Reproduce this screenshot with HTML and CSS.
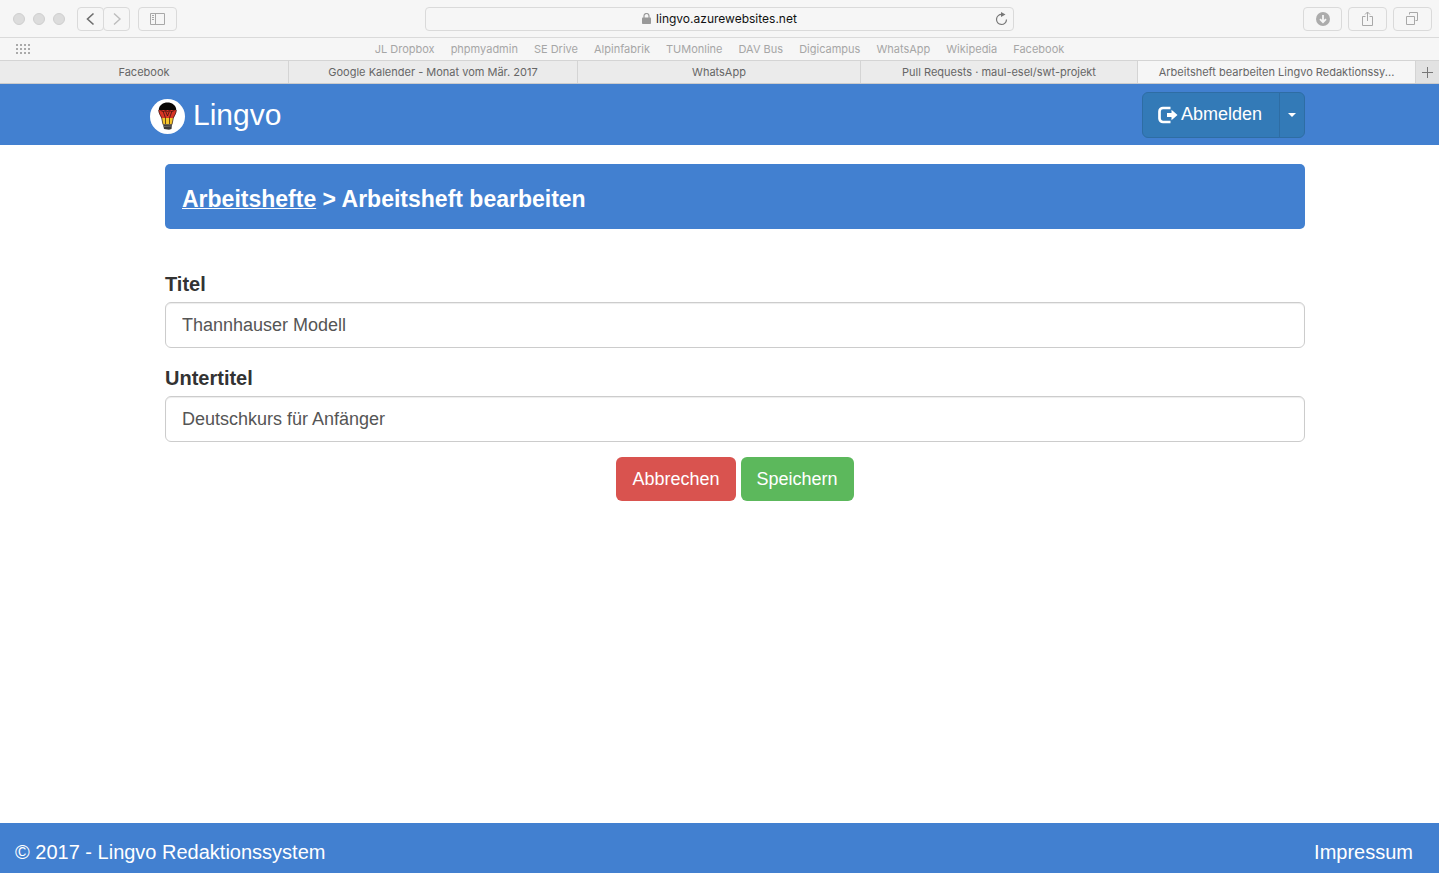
FILE: index.html
```html
<!DOCTYPE html>
<html lang="de">
<head>
<meta charset="utf-8">
<title>Arbeitsheft bearbeiten Lingvo Redaktionssystem</title>
<link rel="stylesheet" href="styles.css">
</head>
<body>
<div class="browser">
  <div class="toolbar">
    <div class="tools">
      <div class="lights"><span class="light"></span><span class="light"></span><span class="light"></span></div>
      <div class="history">
        <button class="tool tool-narrow" type="button" aria-label="Zurück"><svg width="10" height="14" viewBox="0 0 10 14" fill="none" stroke="#6e6e6e" stroke-width="1.6"><path d="M7.500 1.500 1.500 7l6 5.500"/></svg></button>
        <button class="tool tool-narrow" type="button" aria-label="Vorwärts"><svg width="10" height="14" viewBox="0 0 10 14" fill="none" stroke="#bdbdbd" stroke-width="1.400"><path d="m2 1.500 6 5.500-6 5.500"/></svg></button>
      </div>
      <button class="tool" type="button" aria-label="Seitenleiste"><svg width="16" height="12" viewBox="0 0 16 12" fill="none" stroke="#a8a8a8"><path d="M.5.5h14v11H.5zM5.500.5v11M2 2.500h2M2 4.500h2M2 6.500h2"/></svg></button>
    </div>
    <div class="address">
      <svg class="lock" width="9" height="11" viewBox="0 0 9 11"><path d="M2 5V3a2.500 2.500 0 0 1 5 0v2" fill="none" stroke="#999" stroke-width="1.200"/><rect y="4.500" width="9" height="6.500" rx=".8" fill="#999"/></svg>
      <span>lingvo.azurewebsites.net</span>
      <button class="reload" type="button" aria-label="Neu laden"><svg width="13" height="14" viewBox="0 0 13 14"><path d="M7 2.500a5 5 0 1 0 4.500 5" fill="none" stroke="#777" stroke-width="1.200"/><path d="M6 0v5l4.500-2.500z" fill="#777"/></svg></button>
    </div>
    <div class="tools tools-right">
      <button class="tool" type="button" aria-label="Downloads"><svg width="14" height="14" viewBox="0 0 14 14"><circle cx="7" cy="7" r="7" fill="#acacac"/><path d="M7 3v7M4 7.200l3 3 3-3" fill="none" stroke="#f6f6f6" stroke-width="1.800"/></svg></button>
      <button class="tool" type="button" aria-label="Teilen"><svg width="12" height="16" viewBox="0 0 12 16" fill="none" stroke="#a8a8a8"><path d="M3.500 5.500h-3v9h10v-9h-3M5.500 10V1M3 3.500 5.500 1 8 3.500"/></svg></button>
      <button class="tool" type="button" aria-label="Tabs anzeigen"><svg width="13" height="13" viewBox="0 0 13 13" fill="none" stroke="#a8a8a8"><path d="M.5 4.500h8v8h-8zM3.500 2.500v-2h8v8h-2"/></svg></button>
    </div>
  </div>
  <nav class="bookmarks" aria-label="Lesezeichen">
    <svg class="grid-icon" width="15" height="10" viewBox="0 0 15 10" stroke="#aaa" stroke-width="2" stroke-dasharray="2 2"><path d="M0 1h14M0 5h14M0 9h14"/></svg>
    <a href="#">JL Dropbox</a><a href="#">phpmyadmin</a><a href="#">SE Drive</a><a href="#">Alpinfabrik</a><a href="#">TUMonline</a><a href="#">DAV Bus</a><a href="#">Digicampus</a><a href="#">WhatsApp</a><a href="#">Wikipedia</a><a href="#">Facebook</a>
  </nav>
  <div class="tabs">
    <button class="tab" type="button">Facebook</button>
    <button class="tab" type="button">Google Kalender - Monat vom Mär. 2017</button>
    <button class="tab" type="button">WhatsApp</button>
    <button class="tab" type="button">Pull Requests · maul-esel/swt-projekt</button>
    <button class="tab tab-active" type="button">Arbeitsheft bearbeiten Lingvo Redaktionssy...</button>
    <button class="tab-new" type="button" aria-label="Neuer Tab"><svg width="11" height="11" viewBox="0 0 11 11" stroke="#777"><path d="M0 5.500h11M5.500 0v11"/></svg></button>
  </div>
</div>

<header class="navbar">
  <div class="navbar-inner">
    <a class="brand" href="#">
      <svg width="36" height="38" viewBox="0 0 36 38">
        <circle cx="17.500" cy="20.500" r="17.500" fill="#fff"/>
        <path d="M8.700 14.200C9 4 26 4 26.300 14.200z" fill="#0a0706"/>
        <path d="M8.700 14h17.600c.2 3-1.300 5-3 8.200H11.700c-1.700-3.200-3.200-5.200-3-8.200z" fill="#d83424"/>
        <path d="M11.700 22h11.600l-1.300 6.500h-9z" fill="#f5c52b"/>
        <path d="M13 28.200h9l-.5 4.800-2.500.8-5-.8z" fill="#3b3937"/>
        <path d="M8.700 14c0 3 1.800 5.500 3 8l1.300 6.500M26.300 14c0 3-1.800 5.500-3 8L22 28.500M13 15l2.500 7v6M22 15l-2.500 7v6M15.500 15l2 5 2-5" fill="none" stroke="#2a1310" stroke-width=".7"/>
        <path d="M10.500 14.500l3 1 2-1 2 1 2-1 2 1 3-1" fill="none" stroke="#4a100c" stroke-width=".9"/>
        <path d="M13.500 30.500l8-.5" stroke="#777" stroke-width=".8"/>
      </svg>
      <span>Lingvo</span>
    </a>
    <div class="btn-group">
      <button class="btn btn-primary" type="button"><svg width="20" height="18" viewBox="0 0 20 18"><path d="M12.500 2H5A3.500 3.500 0 0 0 1.500 5.500v7A3.500 3.500 0 0 0 5 16h7.500" fill="none" stroke="#fff" stroke-width="2.700"/><path d="M9 7h4.500V3.800L19.500 9l-6 5.200V11H9z" fill="#fff"/></svg><span>Abmelden</span></button>
      <button class="btn btn-primary btn-caret" type="button" aria-label="Menü öffnen"><span class="caret"></span></button>
    </div>
  </div>
</header>

<main class="content">
  <h1 class="banner"><a href="#">Arbeitshefte</a> &gt; Arbeitsheft bearbeiten</h1>
  <form>
    <div class="form-group"><label for="title">Titel</label><input id="title" type="text" value="Thannhauser Modell"></div>
    <div class="form-group"><label for="subtitle">Untertitel</label><input id="subtitle" type="text" value="Deutschkurs für Anfänger"></div>
    <div class="actions">
      <button class="btn btn-danger" type="button">Abbrechen</button>
      <button class="btn btn-success" type="button">Speichern</button>
    </div>
  </form>
</main>

<footer class="footer"><span>© 2017 - Lingvo Redaktionssystem</span><a href="#">Impressum</a></footer>
</body>
</html>
```
FILE: styles.css
```css
* { box-sizing: border-box; }
body {
  margin: 0;
  min-height: 100vh;
  display: flex;
  flex-direction: column;
  background: #fff;
  color: #333;
  font-family: "Liberation Sans", Arial, sans-serif;
}
button { font-family: inherit; cursor: pointer; }
a { color: inherit; text-decoration: none; }
svg { flex: none; }

/* Browser window */
.browser { background: #f6f6f6; font-family: Inter, sans-serif; font-size: 11px; }
.toolbar {
  display: grid;
  grid-template-columns: 1fr 41vw 1fr;
  align-items: center;
  height: 38px;
  padding: 0 7px;
  border-bottom: 1px solid #dadada;
}
.tools { display: flex; align-items: center; gap: 8px; }
.tools-right { justify-content: flex-end; gap: 6px; }
.lights { display: flex; gap: 8px; margin: 0 4px 0 6px; }
.light { width: 12px; height: 12px; border: 1px solid #cfcfcf; border-radius: 50%; background: #dcdcdc; }
.history { display: flex; }
.tool {
  display: flex;
  align-items: center;
  justify-content: center;
  width: 39px;
  height: 24px;
  padding: 0;
  border: 1px solid #dadada;
  border-radius: 4px;
  background: #f6f6f6;
}
.tool-narrow { width: 27px; }
.tool-narrow + .tool-narrow { margin-left: -1px; }
.address {
  position: relative;
  display: flex;
  align-items: center;
  justify-content: center;
  gap: 5px;
  height: 24px;
  border: 1px solid #dadada;
  border-radius: 4px;
  color: #111;
  font-size: 12px;
}
.reload { position: absolute; right: 5px; display: flex; padding: 0; border: 0; background: none; }
.bookmarks {
  position: relative;
  display: flex;
  justify-content: center;
  align-items: center;
  gap: 16px;
  height: 23px;
  border-bottom: 1px solid #d4d4d4;
  color: #a6a6a6;
}
.grid-icon { position: absolute; left: 16px; }
.tabs {
  display: grid;
  grid-template-columns: 289fr 289fr 283fr 277fr 278fr 23px;
  height: 23px;
  border-bottom: 1px solid #ccc;
}
.tab, .tab-new {
  padding: 0;
  border: 0;
  border-right: 1px solid #d4d4d4;
  background: #ebebeb;
  color: #666;
  font-size: 11px;
  white-space: nowrap;
  overflow: hidden;
}
.tab-active { background: #f6f6f6; }
.tab-new { display: flex; align-items: center; justify-content: center; border-right: 0; background: #e2e2e2; }

/* Page header */
.navbar { padding-left: 16px; background: #4280d0; color: #fff; }
.navbar-inner {
  display: flex;
  align-items: center;
  justify-content: space-between;
  max-width: 1155px;
  height: 61px;
  margin: 0 auto;
}
.brand { display: flex; align-items: center; gap: 7px; font-size: 30px; line-height: 36px; }
.btn-group { display: flex; }
.btn {
  padding: 0 16px;
  height: 44px;
  border: 0;
  border-radius: 6px;
  color: #fff;
  font-size: 18px;
}
.btn-primary {
  display: flex;
  align-items: center;
  gap: 3px;
  height: 46px;
  padding: 0 17px 0 15px;
  border: 1px solid #2e6da4;
  border-radius: 6px 0 0 6px;
  background: #337ab7;
}
.btn-caret { padding: 0 8px; margin-left: -1px; border-radius: 0 6px 6px 0; }
.caret { border: 4px solid transparent; border-top-color: #fff; border-bottom: 0; }

/* Page content */
.content { flex: 1; width: 100%; padding-left: 31px; }
.banner, form { max-width: 1140px; margin: 0 auto; }
.banner {
  margin-top: 19px;
  margin-bottom: 41px;
  padding: 21px 17px 16px;
  border-radius: 5px;
  background: #4280d0;
  color: #fff;
  font-size: 23px;
  line-height: 28px;
}
.banner a { text-decoration: underline; text-decoration-thickness: 1px; }
.form-group { margin-bottom: 15px; }
.form-group label { display: block; margin-bottom: 4px; font-size: 20px; font-weight: bold; line-height: 28px; }
.form-group input {
  display: block;
  width: 100%;
  height: 46px;
  padding: 10px 16px;
  border: 1px solid #ccc;
  border-radius: 6px;
  background: #fff;
  box-shadow: inset 0 1px 1px rgba(0, 0, 0, .075);
  color: #555;
  font-family: inherit;
  font-size: 18px;
}
.form-group + .form-group { padding-top: 1px; }
.actions { display: flex; justify-content: center; gap: 5px; }
.btn-danger { background: #d9534f; }
.btn-success { background: #5cb85c; }

.footer {
  display: flex;
  justify-content: space-between;
  padding: 15px 26px 7px 15px;
  background: #4280d0;
  color: #fff;
  font-size: 20px;
  line-height: 28px;
}
```
